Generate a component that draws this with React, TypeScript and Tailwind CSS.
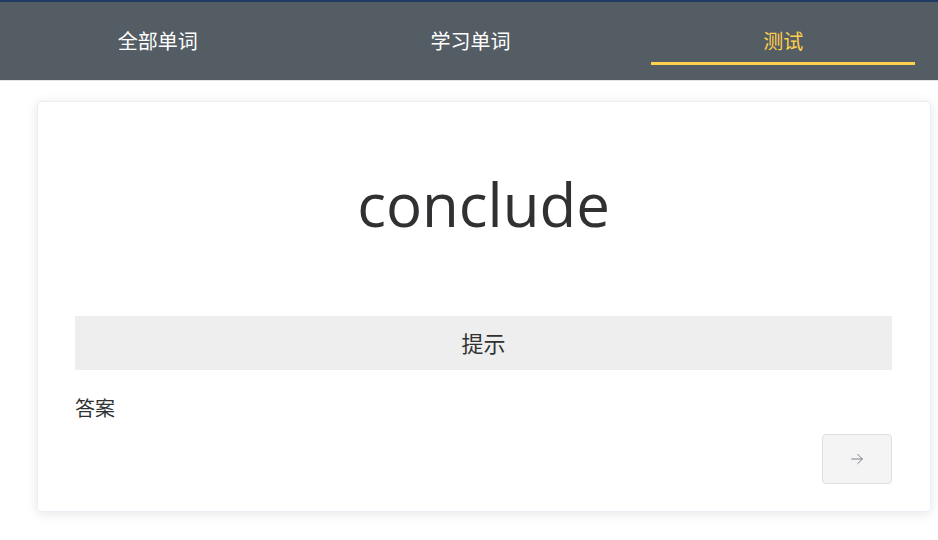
export default function App() {
  const tabs = ["全部单词", "学习单词", "测试"];
  const active = 2;

  return (
    <div className="min-h-screen w-[938px] h-[540px] bg-white overflow-hidden" style={{ fontFamily: '"Segoe UI", "Open Sans", "Noto Sans CJK SC", sans-serif' }}>
      <div className="h-[2px] bg-[#1f3b63]" />
      <nav className="grid grid-cols-3 h-[79px] bg-[#545c64] border-b border-[#e6e6e6]">
        {tabs.map((t, i) => (
          <div key={t} className="flex items-start justify-center pl-[26px] pr-[23px] pt-[20px]">
            <div
              className={
                "flex-1 h-[43px] flex items-center justify-center text-[20px] border-b-[3px] " +
                (i === active ? "text-[#ffd04b] border-[#ffd04b]" : "text-white border-transparent")
              }
            >
              {t}
            </div>
          </div>
        ))}
      </nav>

      <div className="pt-[20px] pl-[37px] pr-[7px]">
        <div className="border border-[#ebeef5] rounded-[4px] shadow-[0_2px_12px_0_rgba(0,0,0,0.1)] pl-[37px] pr-[38px] pb-[27px]">
          <div className="h-[214px] flex items-center justify-center pb-[10px]">
            <span className="text-[60px] text-[#303133] leading-none">conclude</span>
          </div>
          <div className="h-[54px] bg-[#eeeeee] flex items-center justify-center text-[22px] text-[#303133]">
            提示
          </div>
          <div className="mt-[27px] text-[20px] text-[#303133] leading-[24px]">答案</div>
          <div className="flex justify-end mt-[13px]">
            <button className="w-[70px] h-[50px] rounded-[4px] border border-[#dcdfe6] bg-[#f4f4f5] flex items-center justify-center text-[#7d8087]">
              <svg width="16" height="16" viewBox="0 0 24 24" fill="none" stroke="currentColor" strokeWidth="1.5" strokeLinecap="round" strokeLinejoin="round">
                <path d="M4 12h16" />
                <path d="M13 5l7 7-7 7" />
              </svg>
            </button>
          </div>
        </div>
      </div>
    </div>
  );
}
